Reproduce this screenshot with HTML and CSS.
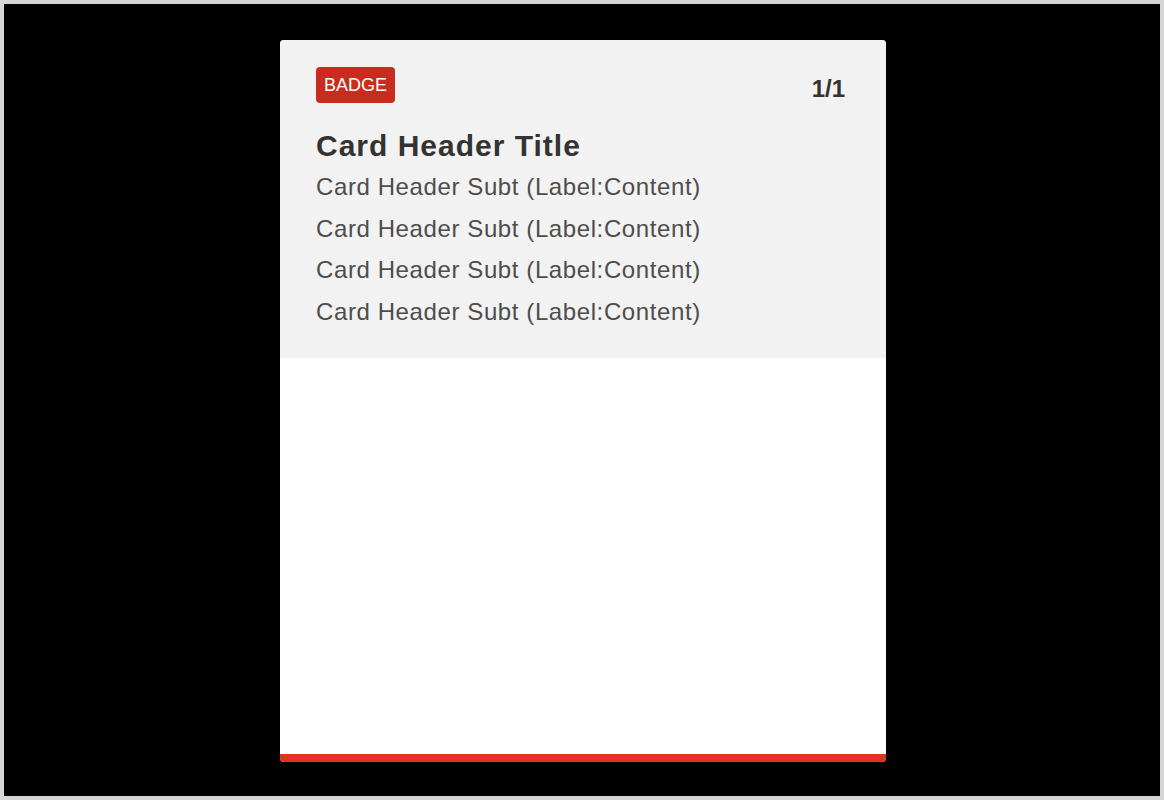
FILE: index.html
```html
<!DOCTYPE html>
<html>
<head>
<meta charset="utf-8">
<link rel="stylesheet" href="styles.css">
</head>
<body>
<div class="frame">
  <div class="card">
    <div class="card-header">
      <div class="header-top">
        <span class="badge">BADGE</span>
        <span class="pager">1/1</span>
      </div>
      <h1 class="title">Card Header Title</h1>
      <div class="subs">
        <div class="sub">Card Header Subt (Label:Content)</div>
        <div class="sub">Card Header Subt (Label:Content)</div>
        <div class="sub">Card Header Subt (Label:Content)</div>
        <div class="sub">Card Header Subt (Label:Content)</div>
      </div>
    </div>
    <div class="card-body"></div>
    <div class="card-bar"></div>
  </div>
</div>
</body>
</html>
```

FILE: styles.css
```css
html, body {
  margin: 0;
  padding: 0;
}
body {
  font-family: "Liberation Sans", Arial, sans-serif;
}
.frame {
  box-sizing: border-box;
  width: 1164px;
  height: 800px;
  border: 4px solid #d6d6d6;
  background: #000;
  display: flex;
  justify-content: center;
  align-items: flex-start;
  padding: 36px 0 0 2px;
}
.card {
  width: 606px;
  height: 722px;
  background: #fff;
  border-radius: 4px;
  overflow: hidden;
  display: flex;
  flex-direction: column;
}
.card-header {
  background: #f2f2f2;
  padding: 27px 41px 26px 36px;
}
.header-top {
  display: flex;
  justify-content: space-between;
  align-items: flex-start;
  height: 36px;
}
.badge {
  display: inline-block;
  background: #c92b1e;
  color: #fff;
  font-size: 18px;
  line-height: 36px;
  height: 36px;
  padding: 0 8px;
  border-radius: 4px;
}
.pager {
  font-size: 24px;
  font-weight: bold;
  color: #333;
  line-height: 28px;
  padding-top: 8px;
}
.title {
  margin: 25px 0 2px;
  font-size: 30px;
  line-height: 36px;
  font-weight: bold;
  letter-spacing: 1px;
  color: #333;
}
.sub {
  font-size: 24px;
  line-height: 41.5px;
  color: #4d4d4d;
  letter-spacing: 0.6px;
}
.card-body {
  flex: 1;
  background: #fff;
}
.card-bar {
  height: 8px;
  background: #e0341f;
}
```
